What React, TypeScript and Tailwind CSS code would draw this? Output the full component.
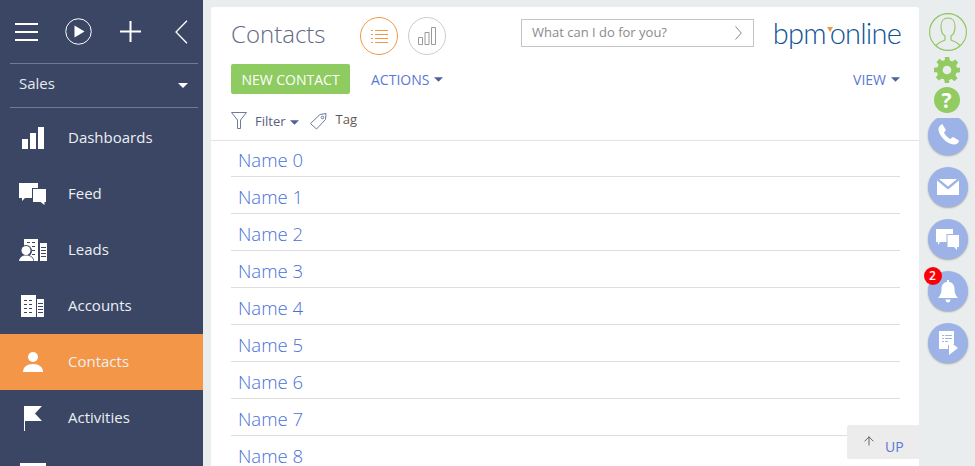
import { ArrowUp } from "lucide-react";
import type { ReactNode } from "react";

const font = "font-['Open_Sans',sans-serif]";

function Caret({ className }: { className: string }) {
  return (
    <svg viewBox="0 0 10 5" className={className} fill="currentColor">
      <path d="M0 0h10L5 5z" />
    </svg>
  );
}

const navItems: { label: string; active?: boolean; icon: ReactNode }[] = [
  {
    label: "Dashboards",
    icon: (
      <svg viewBox="0 0 24 24" className="w-[24px] h-[24px]" fill="white">
        <path d="M1 13h6v10H1zM9 7h6v16H9zM17 1h6v22h-6z" />
      </svg>
    ),
  },
  {
    label: "Feed",
    icon: (
      <svg viewBox="0 0 28 22" className="w-[28px] h-[22px]" fill="white">
        <path d="M0 0h19v5h-6v10H6l-3 3v-3H0z" />
        <path d="M14 6h13v13h-1.500v3l-4-3H14z" />
      </svg>
    ),
  },
  {
    label: "Leads",
    icon: (
      <svg viewBox="0 0 28 22" className="w-[28px] h-[22px]" fill="white">
        <path d="M5 0h14v22H5z" />
        <path d="M21 4h7v18h-7z" />
        <path d="M8 3h3v1H8zM13 3h3v1h-3zM13 7h3v1h-3zM13 11h3v1h-3zM13 15h3v1h-3zM22 8h5v1h-5zM22 11h5v1h-5zM22 14h5v1h-5zM22 17h5v1h-5z" fill="#3a4664" />
        <circle cx="7" cy="12" r="6" fill="#3a4664" />
        <path d="M0 22c0-4 3-6 7-6s8 2 8 6z" fill="#3a4664" />
        <circle cx="7" cy="11.500" r="4.500" />
        <path d="M0 22c.5-3.500 3-5.500 7-5.500s7 2 7.500 5.500z" />
      </svg>
    ),
  },
  {
    label: "Accounts",
    icon: (
      <svg viewBox="0 0 24 22" className="w-[24px] h-[22px]" fill="white">
        <path d="M0 0h15v22H0z" />
        <path d="M16 4h7v18h-7z" />
        <path d="M3 5h3v1H3zM8 5h3v1H8zM3 9h3v1H3zM8 9h3v1H8zM3 13h3v1H3zM8 13h3v1H8zM3 17h3v1H3zM8 17h3v1H8zM17 8h5v1h-5zM17 11h5v1h-5zM17 14h5v1h-5zM17 17h5v1h-5z" fill="#3a4664" />
      </svg>
    ),
  },
  {
    label: "Contacts",
    active: true,
    icon: (
      <svg viewBox="0 0 20 20" className="w-[20px] h-[20px]" fill="white">
        <circle cx="10" cy="5" r="5" />
        <path d="M0 20c0-5 4-8 10-8s10 3 10 8z" />
      </svg>
    ),
  },
  {
    label: "Activities",
    icon: (
      <svg viewBox="0 0 19 25" className="w-[19px] h-[25px]" fill="white">
        <path d="M0 0h1v25H0z" />
        <path d="M1 0h17l-7 7.500 7 7.500H1z" />
      </svg>
    ),
  },
  {
    // only the top of this item's icon is on screen
    label: "",
    icon: (
      <svg viewBox="0 0 26 22" className="w-[26px] h-[22px]" fill="white">
        <path d="M0 0h26v22H0z" />
      </svg>
    ),
  },
];

const names = ["Name 0", "Name 1", "Name 2", "Name 3", "Name 4", "Name 5", "Name 6", "Name 7", "Name 8"];

function RoundButton({ children, badge }: { children: ReactNode; badge?: string }) {
  return (
    <div className="relative w-[40px] h-[40px] shrink-0 rounded-full bg-[#9db3e8] shadow-[0_1px_2px_rgba(0,0,0,0.3)] flex items-center justify-center">
      {children}
      {badge && (
        <span className="absolute left-[-4px] top-[-4px] w-[18px] h-[18px] rounded-full bg-[#fb0007] text-white text-[12px] leading-[18px] font-semibold text-center">
          {badge}
        </span>
      )}
    </div>
  );
}

export default function App() {
  return (
    <div className={`${font} flex w-[975px] h-[466px] overflow-hidden bg-[#e9edee]`}>
      {/* Left menu */}
      <aside className="w-[203px] h-full shrink-0 bg-[#3a4664] text-white overflow-hidden">
        <div className="mx-[10px] w-[188px] h-[64px] border-b border-[#6f7a93] flex items-center">
          <svg viewBox="0 0 23 18" className="ml-[5px] w-[23px] h-[18px]" fill="white">
            <path d="M0 0h23v2H0zM0 8h23v2H0zM0 16h23v2H0z" />
          </svg>
          <svg viewBox="0 0 27 27" className="ml-[27px] w-[27px] h-[27px]" fill="none">
            <circle cx="13.500" cy="13.500" r="12.750" stroke="white" strokeWidth="1" />
            <path d="M9.500 7.500l10 6-10 6z" fill="white" />
          </svg>
          <svg viewBox="0 0 21 21" className="ml-[28px] w-[21px] h-[21px]" fill="white">
            <path d="M9.500 0h2v21h-2zM0 9.500h21v2H0z" />
          </svg>
          <svg viewBox="0 0 13 24" className="ml-[34px] w-[13px] h-[24px]" fill="none" stroke="white" strokeWidth="1.300">
            <path d="M12 .7L1 12l11 11.300" />
          </svg>
        </div>
        <div className="mx-[10px] w-[188px] h-[44px] border-b border-[#6f7a93] flex items-center justify-between pl-[9px] pr-[10px] pb-[5px] text-[15px] text-[#e9ebf0]">
          <span>Sales</span>
          <Caret className="mt-[5px] w-[10px] h-[5px] text-white" />
        </div>
        <nav className="mt-[2px]">
          {navItems.map((item) => (
            <div
              key={item.label}
              className={`h-[56px] flex items-center ${item.active ? "bg-[#f49647]" : ""}`}
            >
              <div className="w-[68px] pr-[2px] flex justify-center">{item.icon}</div>
              {item.label && <span className="mt-[-2px] text-[15px] text-[#eceef3]">{item.label}</span>}
            </div>
          ))}
        </nav>
      </aside>

      {/* Main card */}
      <main className="relative ml-[8px] mt-[7px] w-[708px] h-[459px] shrink-0 bg-white rounded-t-[3px] overflow-hidden">
        <div className="pl-[20px] pr-[19px] h-[134px] border-b border-[#e2e2e2]">
          <div className="flex items-start h-[50px]">
            <h1 className="mt-[10px] w-[129px] text-[24px] leading-[34px] font-light text-[#626985]">Contacts</h1>
            <div className="mt-[10px] w-[38px] h-[38px] rounded-full border border-[#f49647] flex items-center justify-center">
              <svg viewBox="0 0 17 13" className="w-[17px] h-[13px]" fill="#f49647">
                <path d="M0 0h2v1H0zM4 0h13v1H4zM0 4h2v1H0zM4 4h13v1H4zM0 8h2v1H0zM4 8h13v1H4zM0 12h2v1H0zM4 12h13v1H4z" />
              </svg>
            </div>
            <div className="mt-[10px] ml-[10px] w-[38px] h-[38px] rounded-full border border-[#cccccc] flex items-center justify-center">
              <svg viewBox="0 0 18 18" className="w-[18px] h-[18px]" fill="none" stroke="#9a9a9a">
                <path d="M.5 10.500h4v7h-4zM7 5.500h4v12H7zM13.500.5h4v17h-4z" />
              </svg>
            </div>
            <div className="ml-[75px] mt-[12px] w-[233px] h-[28px] border border-[#c4c4c4] flex items-center justify-between pl-[10px] pr-[11px] text-[13px] text-[#8b8b8b]">
              <span>What can I do for you?</span>
              <svg viewBox="0 0 7 14" className="w-[7px] h-[14px]" fill="none" stroke="#888888">
                <path d="M.5.500L6.300 7 .5 13.500" />
              </svg>
            </div>
            <div className="ml-auto mr-[-1px] mt-[9px] relative font-['Lato',sans-serif] font-light text-[29px] leading-[34px] tracking-[-0.8px] text-[#0f5398]">
              bpm<span className="inline-block w-[4px]" />online
              <span className="absolute left-[54px] top-[11px] w-0 h-0 border-l-[3px] border-r-[3px] border-t-[5px] border-l-transparent border-r-transparent border-t-[#f49647]" />
            </div>
          </div>
          <div className="flex items-center mt-[7px] h-[30px]">
            <button className="w-[119px] h-[30px] rounded-[2px] bg-[#8ecb60] text-white text-[14px] text-center">
              NEW CONTACT
            </button>
            <span className="ml-[21px] text-[14px] text-[#5a78d6]">ACTIONS</span>
            <Caret className="ml-[5px] w-[9px] h-[5px] text-[#4d6396]" />
            <span className="ml-auto text-[14px] text-[#5a78d6]">VIEW</span>
            <Caret className="ml-[5px] w-[9px] h-[5px] text-[#4d6396]" />
          </div>
          <div className="flex items-center mt-[16px] h-[24px] text-[13px] text-[#59607e]">
            <svg viewBox="0 0 16 17" className="mt-[-3px] w-[16px] h-[17px]" fill="none" stroke="#6d7a9c">
              <path d="M.5.500h15L9.500 8v8.500h-3V8z" />
            </svg>
            <span className="ml-[8px]">Filter</span>
            <Caret className="ml-[4px] w-[9px] h-[5px] text-[#4d6396]" />
            <svg viewBox="0 0 17 17" className="ml-[11px] mt-[-2px] w-[17px] h-[17px]" fill="none" stroke="#6d7a9c">
              <path d="M.5 10.500L10 1.500l6-1-.5 6-9 9.500z" />
              <circle cx="12.500" cy="4.500" r="1.300" />
            </svg>
            <span className="ml-[9px] mt-[-4px] text-[#5f5a55]">Tag</span>
          </div>
        </div>
        <div className="mx-[20px] mt-[-1px] w-[669px]">
          {names.map((name) => (
            <div
              key={name}
              className="h-[37px] pl-[7px] pt-[5px] border-b border-[#dedede] text-[18.500px] leading-[30px] font-light text-[#4a70d8]"
            >
              {name}
            </div>
          ))}
        </div>
        <div className="absolute right-0 top-[418px] w-[72px] h-[34px] bg-[#ececec] rounded-l-[2px] flex text-[14px] text-[#5a78d6]">
          <ArrowUp className="ml-[15px] mt-[9px] w-[14px] h-[14px] text-[#555555]" strokeWidth={1.5} />
          <span className="ml-[9px] mt-[11px] leading-[22px]">UP</span>
        </div>
      </main>

      {/* Right rail */}
      <aside className="ml-[1px] flex-1 h-full flex flex-col">
        <div className="h-[118px] shrink-0 flex flex-col items-center">
          <svg viewBox="0 0 38 38" className="mt-[13px] w-[38px] h-[38px]" fill="none" stroke="#8ec45f" strokeWidth="1.100">
            <circle cx="19" cy="19" r="18.400" />
            <path d="M7 33c1-3 4-4 9-6v-4c-2-1-4-5-4-10 0-5 3-8 7-8s7 3 7 8c0 5-2 9-4 10v4c5 2 8 3 9 6" />
          </svg>
          <svg viewBox="0 0 24 24" className="mt-[6px] mr-[2px] w-[26px] h-[26px]" fill="#91cb61">
            <path
              fillRule="evenodd"
              d="M10 0h4l.6 3.300 2.200.9 2.700-1.900 2.800 2.800-1.900 2.700.9 2.200L24 10v4l-3.300.6-.9 2.200 1.900 2.700-2.800 2.800-2.700-1.900-2.200.9L14 24h-4l-.6-3.300-2.200-.9-2.700 1.900-2.800-2.800 1.900-2.700-.9-2.200L0 14v-4l3.300-.6.9-2.200-1.900-2.700 2.800-2.800 2.700 1.900 2.200-.9zM12 8a4 4 0 100 8 4 4 0 000-8z"
            />
          </svg>
          <div className="mt-[4px] mr-[2px] w-[26px] h-[26px] rounded-full bg-[#91cb61] text-white text-[21px] leading-[26px] font-bold text-center">
            ?
          </div>
        </div>
        <div className="flex-1 overflow-hidden">
          <div className="mt-[-3px] flex flex-col items-center gap-[12px]">
            <RoundButton>
              <svg viewBox="0 0 24 24" className="w-[24px] h-[24px]" fill="white">
                <path d="M6.600 1.500l3 5c.3.5.2 1-.2 1.400L8 9.500c1 2.500 3.800 5.500 6.500 6.500l1.700-1.500c.4-.4 1-.4 1.400-.2l4.900 3c.4.300.5.800.3 1.200-1 2-2.800 3.300-4.800 3C11 21 3.500 13.500 2.500 7c-.3-2.200 1-4.200 3-5.500.4-.3.900-.2 1.100 0z" />
              </svg>
            </RoundButton>
            <RoundButton>
              <svg viewBox="0 0 22 16" className="w-[22px] h-[16px]" fill="white">
                <path d="M0 1.500l11 9 11-9V16H0z" />
                <path d="M2 0h18l-9 7.500z" />
              </svg>
            </RoundButton>
            <RoundButton>
              <svg viewBox="0 0 24 21" className="w-[24px] h-[21px]" fill="white">
                <path d="M0 0h17v5h-6.500v8H4l-2 3v-3H0z" />
                <path d="M11.500 6H23v12h-2v3l-3-3h-6.500z" />
              </svg>
            </RoundButton>
            <RoundButton badge="2">
              <svg viewBox="0 0 20 23" className="w-[20px] h-[23px]" fill="white">
                <path d="M9 0h2v2c4 .5 5.500 3.500 5.500 7 0 4 1 6 3.500 9H0c2.500-3 3.500-5 3.500-9 0-3.500 1.500-6.500 5.500-7z" />
                <path d="M7.500 19.500h5c0 2-1 3-2.500 3s-2.500-1-2.500-3z" />
              </svg>
            </RoundButton>
            <RoundButton>
              <svg viewBox="0 0 20 24" className="w-[20px] h-[24px]" fill="white">
                <path d="M1 0h15v13l-6 1v4H1z" />
                <path d="M11 10l9 7-9 7z" />
                <path d="M4 4h2v1H4zM7 4h7v1H7zM4 7h2v1H4zM7 7h7v1H7zM4 10h2v1H4zM7 10h3v1H7z" fill="#9db3e8" />
              </svg>
            </RoundButton>
          </div>
        </div>
      </aside>
    </div>
  );
}
